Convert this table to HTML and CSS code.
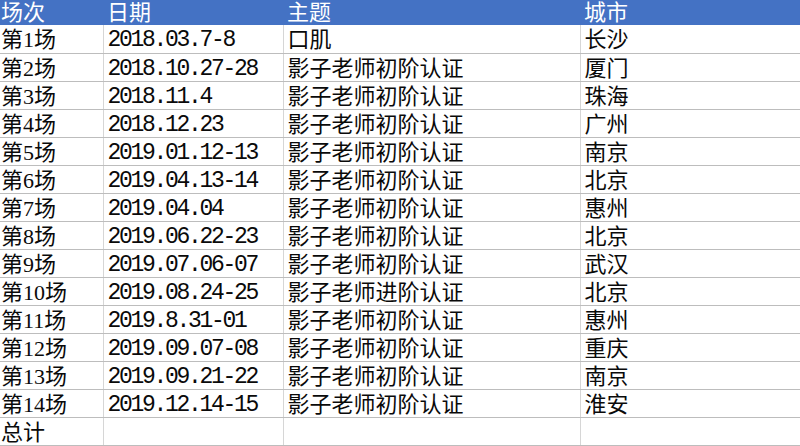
FILE: index.html
```html
<!DOCTYPE html>
<html lang="zh-CN">
<head>
<meta charset="utf-8">
<link rel="stylesheet" href="styles.css">
<title>场次</title>
</head>
<body>
<table class="sheet">
  <colgroup>
    <col class="c1"><col class="c2"><col class="c3"><col class="c4">
  </colgroup>
  <thead>
    <tr><th>场次</th><th>日期</th><th>主题</th><th>城市</th></tr>
  </thead>
  <tbody>
    <tr><td>第1场</td><td class="date">2018.03.7-8</td><td>口肌</td><td>长沙</td></tr>
    <tr><td>第2场</td><td class="date">2018.10.27-28</td><td>影子老师初阶认证</td><td>厦门</td></tr>
    <tr><td>第3场</td><td class="date">2018.11.4</td><td>影子老师初阶认证</td><td>珠海</td></tr>
    <tr><td>第4场</td><td class="date">2018.12.23</td><td>影子老师初阶认证</td><td>广州</td></tr>
    <tr><td>第5场</td><td class="date">2019.01.12-13</td><td>影子老师初阶认证</td><td>南京</td></tr>
    <tr><td>第6场</td><td class="date">2019.04.13-14</td><td>影子老师初阶认证</td><td>北京</td></tr>
    <tr><td>第7场</td><td class="date">2019.04.04</td><td>影子老师初阶认证</td><td>惠州</td></tr>
    <tr><td>第8场</td><td class="date">2019.06.22-23</td><td>影子老师初阶认证</td><td>北京</td></tr>
    <tr><td>第9场</td><td class="date">2019.07.06-07</td><td>影子老师初阶认证</td><td>武汉</td></tr>
    <tr><td>第10场</td><td class="date">2019.08.24-25</td><td>影子老师进阶认证</td><td>北京</td></tr>
    <tr><td>第11场</td><td class="date">2019.8.31-01</td><td>影子老师初阶认证</td><td>惠州</td></tr>
    <tr><td>第12场</td><td class="date">2019.09.07-08</td><td>影子老师初阶认证</td><td>重庆</td></tr>
    <tr><td>第13场</td><td class="date">2019.09.21-22</td><td>影子老师初阶认证</td><td>南京</td></tr>
    <tr><td>第14场</td><td class="date">2019.12.14-15</td><td>影子老师初阶认证</td><td>淮安</td></tr>
    <tr><td>总计</td><td class="date"></td><td></td><td></td></tr>
  </tbody>
</table>
</body>
</html>
```
FILE: styles.css
```css
html, body {
  margin: 0;
  padding: 0;
  background: #ffffff;
}
body {
  width: 800px;
  height: 446px;
  overflow: hidden;
  font-family: "Liberation Serif", "Noto Sans CJK SC", serif;
  font-size: 22px;
  color: #0a0a0a;
}
.sheet {
  width: 800px;
  border-collapse: collapse;
  table-layout: fixed;
}
.c1 { width: 103px; }
.c2 { width: 180px; }
.c3 { width: 297px; }
.c4 { width: 220px; }

.sheet thead tr { height: 25px; }
.sheet th {
  background: #4472c4;
  color: #ffffff;
  font-weight: normal;
  text-align: left;
  height: 25px;
  line-height: 20px;
  padding: 0 0 0 4px;
  vertical-align: middle;
  white-space: nowrap;
  overflow: hidden;
}
.sheet th:first-child { padding-left: 1px; }

.sheet tbody tr { height: 28px; }
.sheet td {
  height: 27px;
  line-height: 20px;
  padding: 3px 0 0 4px;
  border-bottom: 1px solid #bdbdbd;
  border-left: 1px solid #d6d6d6;
  vertical-align: middle;
  white-space: nowrap;
  overflow: hidden;
  box-sizing: border-box;
}
.sheet td:first-child {
  border-left: none;
  padding-left: 1px;
}
.sheet td.date {
  font-family: "Liberation Mono", monospace;
  font-size: 23px;
  letter-spacing: -2.3px;
}
```
